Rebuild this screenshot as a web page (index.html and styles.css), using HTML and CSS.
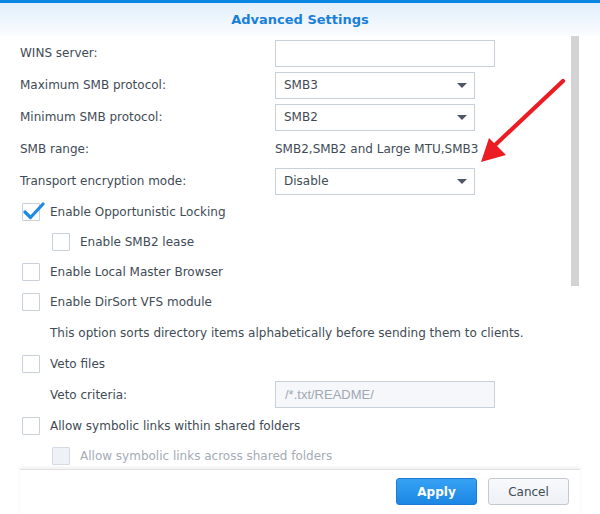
FILE: index.html
```html
<!DOCTYPE html>
<html>
<head>
<meta charset="utf-8">
<link rel="stylesheet" href="styles.css">
</head>
<body>
<div class="dialog">
  <div class="topbar"></div>
  <div class="header"><span class="title">Advanced Settings</span></div>
  <div class="body">
    <div class="content">
      <div class="row"><span class="label">WINS server:</span><span class="input"></span></div>
      <div class="row"><span class="label">Maximum SMB protocol:</span><span class="select"><span>SMB3</span><span class="caret"></span></span></div>
      <div class="row"><span class="label">Minimum SMB protocol:</span><span class="select"><span>SMB2</span><span class="caret"></span></span></div>
      <div class="row"><span class="label">SMB range:</span><span class="value">SMB2,SMB2 and Large MTU,SMB3</span></div>
      <div class="row"><span class="label">Transport encryption mode:</span><span class="select"><span>Disable</span><span class="caret"></span></span></div>

      <div class="crow"><span class="box checked"><svg class="tick" width="22" height="20" viewBox="0 0 22 20"><path d="M2 11 L7.5 16.5 L20 3" fill="none" stroke="#1d8ae8" stroke-width="3.2" stroke-linecap="round" stroke-linejoin="round"/></svg></span><span>Enable Opportunistic Locking</span></div>
      <div class="crow sub"><span class="box"></span><span>Enable SMB2 lease</span></div>
      <div class="crow"><span class="box"></span><span>Enable Local Master Browser</span></div>
      <div class="crow"><span class="box"></span><span>Enable DirSort VFS module</span></div>
      <div class="desc">This option sorts directory items alphabetically before sending them to clients.</div>
      <div class="crow veto"><span class="box"></span><span>Veto files</span></div>
      <div class="row crit"><span class="label sublabel">Veto criteria:</span><span class="input disabled">/*.txt/README/</span></div>
      <div class="crow sym"><span class="box"></span><span>Allow symbolic links within shared folders</span></div>
      <div class="crow sub dis"><span class="box"></span><span>Allow symbolic links across shared folders</span></div>
    </div>
    <div class="track"><div class="thumb"></div></div>
  </div>
  <div class="footer">
    <button class="btn primary">Apply</button>
    <button class="btn">Cancel</button>
  </div>
  <svg class="arrow" width="600" height="514" viewBox="0 0 600 514">
    <line x1="563" y1="81" x2="493" y2="147" stroke="#ec1c24" stroke-width="4.2" stroke-linecap="round"/>
    <polygon points="481,162 489,138 506,155" fill="#ec1c24"/>
  </svg>
</div>
</body>
</html>
```
FILE: styles.css
```css
html, body { margin: 0; padding: 0; background: #fff; }
body { font-family: "DejaVu Sans", Verdana, sans-serif; font-size: 12px; color: #414b55; }
.dialog { position: relative; width: 600px; height: 514px; overflow: hidden; background: #fff; }
.topbar { height: 3px; background: #0a86e3; }
.header { height: 33px; display: flex; align-items: center; justify-content: center; background: linear-gradient(#e1eefa, #fbfdff); }
.title { font-weight: bold; font-size: 13px; color: #1a7fd8; margin-top: -1px; }
.body { display: flex; height: 433px; }
.content { flex: 1; overflow: hidden; padding-left: 20px; padding-top: 1px; }
.row { display: flex; align-items: center; height: 32px; }
.label { width: 255px; flex: none; }
.input { width: 209px; height: 25px; border: 1px solid #c8d0da; display: flex; align-items: center; padding-left: 9px; box-sizing: content-box; }
.input.disabled { background: #f5f7fa; color: #a0a8b2; font-family: "Liberation Sans", Arial, sans-serif; font-size: 13px; }
.select { width: 183px; height: 25px; border: 1px solid #c8d0da; display: flex; align-items: center; justify-content: space-between; padding: 0 7px 0 8px; }
.caret { width: 0; height: 0; border-left: 5.5px solid transparent; border-right: 5.5px solid transparent; border-top: 5px solid #4e5762; margin-top: 1px; }
.crow { display: flex; align-items: center; height: 30px; padding-left: 2px; }
.crow.sub { padding-left: 32px; }
.box { position: relative; width: 16px; height: 16px; border: 1px solid #c8d0da; border-radius: 1px; margin-right: 10px; flex: none; background: #fff; }
.tick { position: absolute; left: 0; top: -3px; }
.desc { height: 31px; display: flex; align-items: center; padding-left: 30px; }
.veto { height: 31px; }
.crit { height: 31px; }
.sublabel { padding-left: 30px; width: 225px; }
.sym { height: 31px; }
.dis { color: #a4acb6; }
.dis .box { background: #eef2f6; border-color: #d5dbe3; }
.track { width: 8px; margin-right: 21px; flex: none; }
.thumb { height: 250px; background: #d3d3d6; }
.footer { height: 45px; border-top: 1px solid #e3e3e3; box-shadow: 0 -2px 3px rgba(0,0,0,0.06); margin: 0 20px; display: flex; justify-content: flex-end; align-items: flex-start; gap: 11px; padding-top: 8px; padding-right: 11px; position: relative; }
.btn { width: 81px; height: 27px; border-radius: 3px; font-family: "DejaVu Sans", Verdana, sans-serif; font-size: 12px; border: 1px solid #c3cad3; background: linear-gradient(#f8f9fb, #eef1f5); color: #414b55; }
.btn.primary { background: linear-gradient(#36a2f4, #1c87e3); border-color: #1b7bd3; color: #fff; font-weight: bold; }
.arrow { position: absolute; left: 0; top: 0; pointer-events: none; }
```
